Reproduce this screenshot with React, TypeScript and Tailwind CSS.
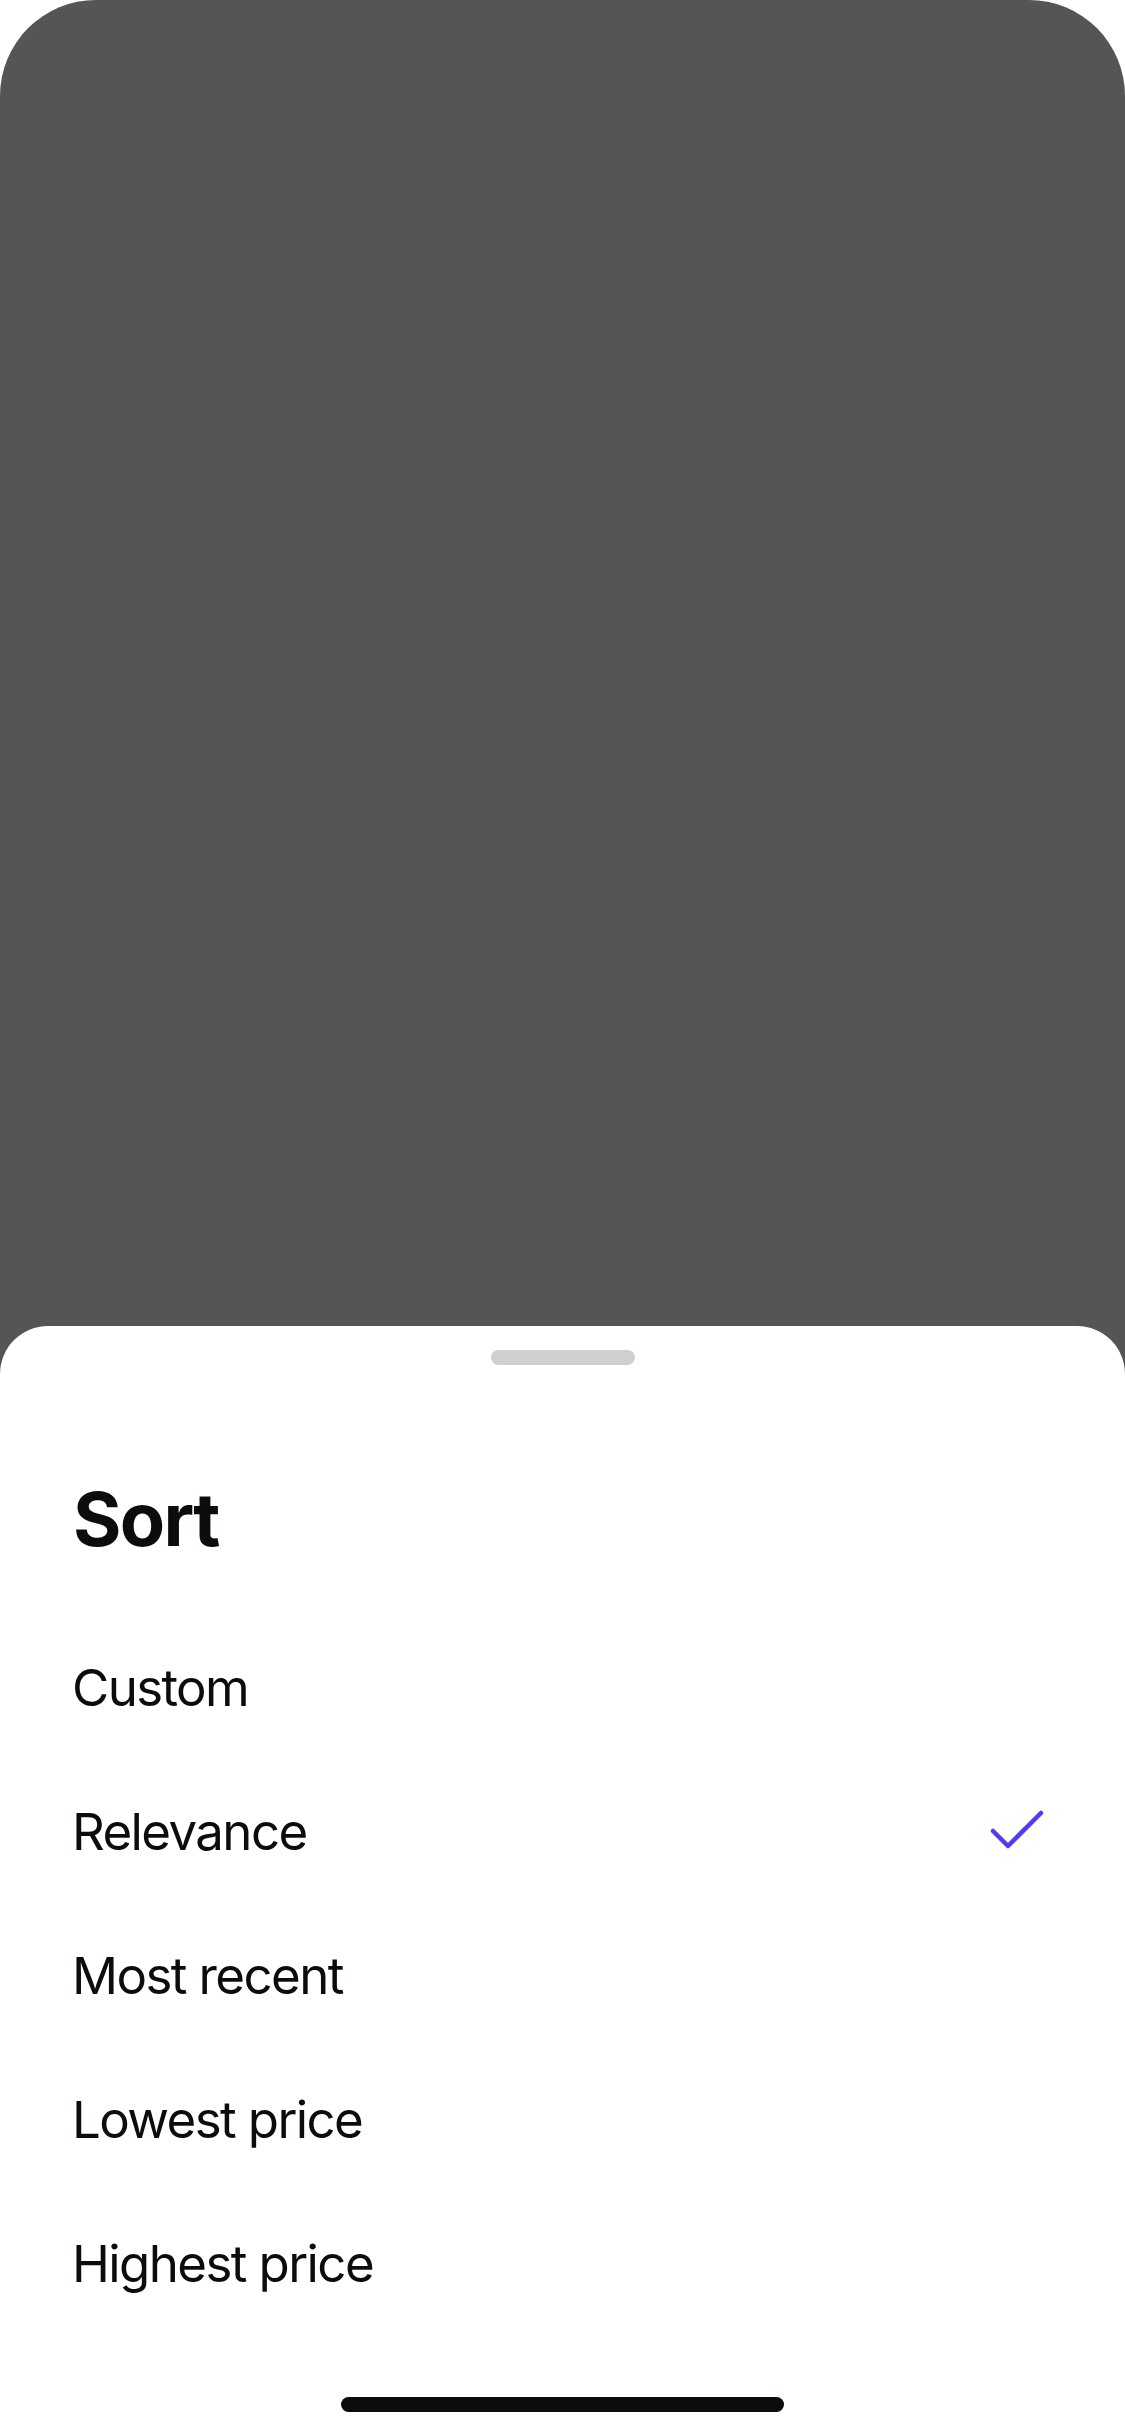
import React from "react";

const options = ["Custom", "Relevance", "Most recent", "Lowest price", "Highest price"];

function CheckIcon() {
  return (
    <svg width="72" height="72" viewBox="0 0 24 24" fill="none" stroke="#4f3cf0" strokeWidth="1.5" strokeLinecap="round" strokeLinejoin="round">
      <path d="M20 6 9 17l-5-5" />
    </svg>
  );
}

export default function App() {
  const selected = "Relevance";

  return (
    <div className="w-[1125px] h-[2436px] bg-white font-['Inter',sans-serif] text-[#0b0d0c]">
      <div className="h-full flex flex-col bg-[#545554] rounded-t-[96px] overflow-hidden">
        {/* dimmed content behind the sheet */}
        <div className="flex-1" />

        {/* Bottom sheet */}
        <div className="h-[1110px] bg-white rounded-t-[48px] flex flex-col">
          <div className="pt-[24px] flex justify-center">
            <div className="w-[144px] h-[15px] rounded-full bg-[#cdcfd1]" />
          </div>

          <h1 className="mt-[117px] px-[73px] text-[74px] leading-none font-bold tracking-[-1.7px]">Sort</h1>

          <ul className="mt-[59px]">
            {options.map((opt) => (
              <li key={opt} className="h-[144px] flex items-center justify-between pl-[72px] pr-[72px]">
                <span className="text-[51px] leading-none tracking-[-1.6px]">{opt}</span>
                {opt === selected && <CheckIcon />}
              </li>
            ))}
          </ul>

          <div className="mt-auto pb-[24px] flex justify-center">
            <div className="w-[443px] h-[15px] rounded-full bg-[#0b0d0c]" />
          </div>
        </div>
      </div>
    </div>
  );
}
